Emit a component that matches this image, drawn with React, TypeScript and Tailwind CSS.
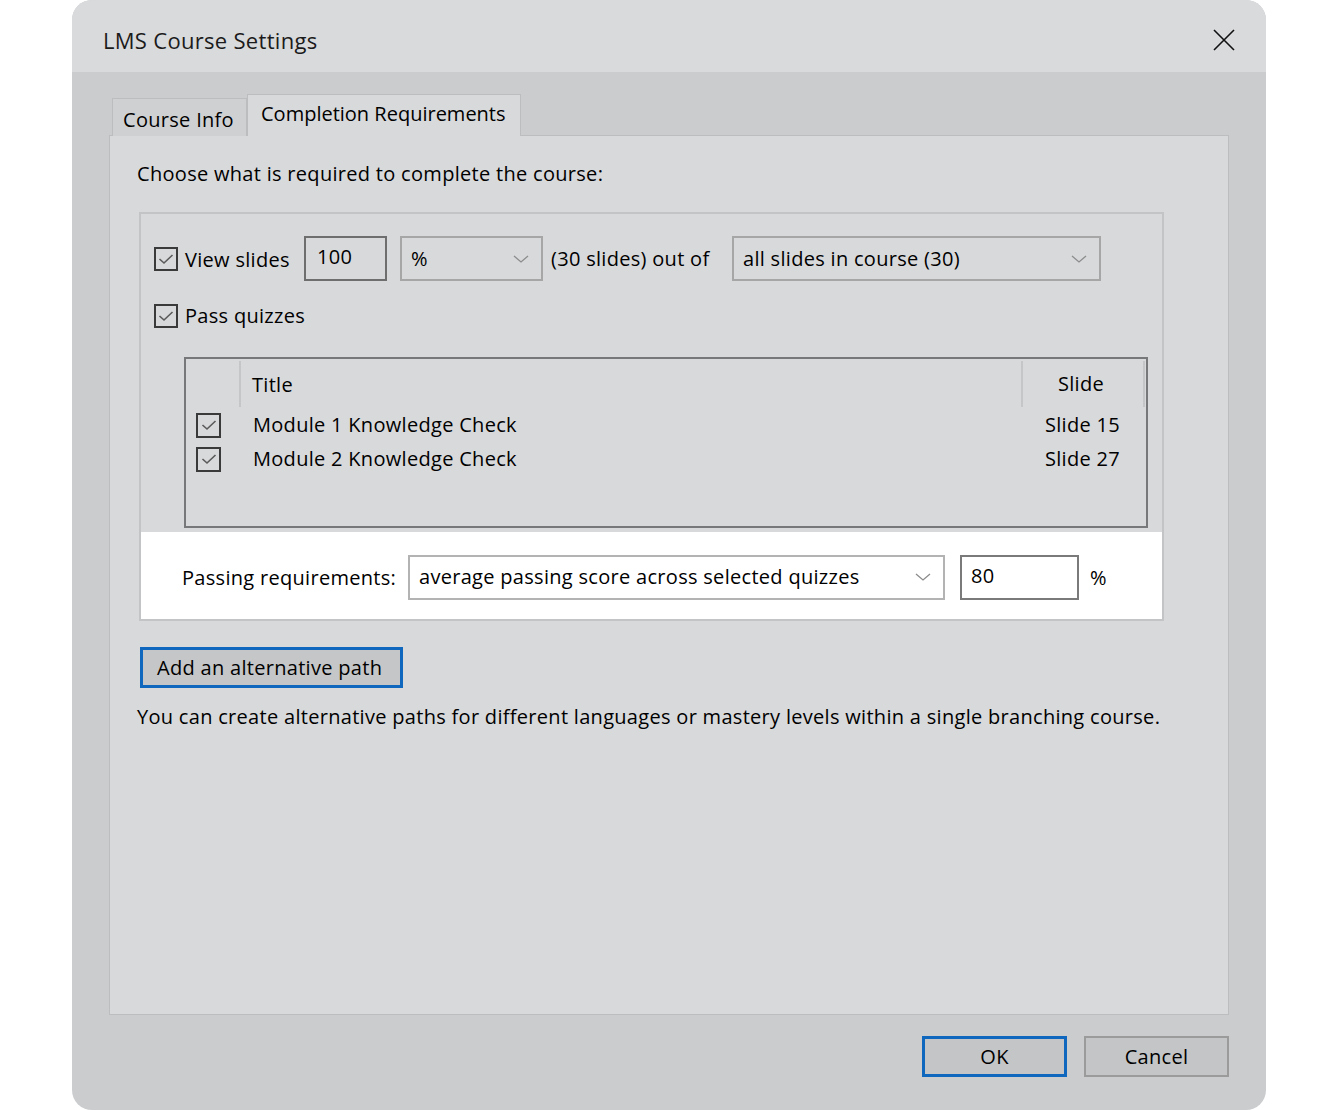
import React from 'react';

const font = { fontFamily: '"Open Sans", "Noto Sans", Arial, sans-serif' };

function Chevron() {
  return (
    <svg width="16" height="10" viewBox="0 0 16 10" className="shrink-0">
      <path d="M1 2 L8 8 L15 2" fill="none" stroke="#8c8c8c" strokeWidth="1.3" />
    </svg>
  );
}

function CheckBox({ size = 24 }: { size?: number }) {
  return (
    <div
      className="flex items-center justify-center border-2 border-[#3a3a3a] bg-transparent shrink-0"
      style={{ width: size, height: size }}
    >
      <svg width="16" height="12" viewBox="0 0 16 12">
        <path d="M1.5 6 L6 10 L14.5 2" fill="none" stroke="#5a5a5a" strokeWidth="1.6" />
      </svg>
    </div>
  );
}

function Dropdown({ value, className }: { value: string; className: string }) {
  return (
    <div className={`flex items-center justify-between border-2 pl-[9px] pr-[12px] h-[45px] ${className}`}>
      <span>{value}</span>
      <Chevron />
    </div>
  );
}

export default function App() {
  return (
    <div className="w-[1330px] h-[1110px] bg-white text-[20px] tracking-[0.3px] text-black" style={font}>
      <div className="ml-[72px] w-[1194px] h-[1110px] rounded-[20px] overflow-hidden bg-[#cbccce] flex flex-col">
        {/* Title bar */}
        <div className="h-[72px] bg-[#d9dadc] flex items-start justify-between pl-[31px] pr-[31px] shrink-0">
          <span className="text-[22px] text-[#1b1b1b] mt-[25px] leading-[30px]">LMS Course Settings</span>
          <svg width="22" height="22" viewBox="0 0 22 22" className="mt-[29px]">
            <path d="M1 1 L21 21 M21 1 L1 21" stroke="#111" strokeWidth="1.6" />
          </svg>
        </div>

        {/* Tabs */}
        <div className="pl-[37px] pr-[37px] pt-[22px] flex flex-col">
          <div className="flex items-end h-[42px] relative z-10 -mb-[1px]">
            <div className="ml-[3px] w-[135px] h-[38px] border border-b-0 border-[#bcbdbf] bg-[#cfd0d2] flex items-center pl-[10px] pt-[4px]">
              Course Info
            </div>
            <div className="w-[274px] h-[42px] border border-b-0 border-[#bcbdbf] bg-[#d8d9db] flex items-center pl-[13px] pb-[4px] tracking-[0px]">
              Completion Requirements
            </div>
          </div>

          {/* Tab panel */}
          <div className="h-[880px] border border-[#bcbdbf] bg-[#d8d9db] pl-[27px] flex flex-col">
            <div className="h-[76px] flex items-center">Choose what is required to complete the course:</div>

            {/* Group box */}
            <div className="ml-[2px] w-[1025px] border-2 border-[#c3c4c6] flex flex-col">
              <div className="flex items-center h-[45px] mt-[22px] pl-[13px]">
                <CheckBox />
                <span className="ml-[7px] mt-[3px] w-[113px]">View slides</span>
                <div className="ml-[6px] w-[83px] h-[45px] border-2 border-[#6e6e6e] pl-[11px] pt-[4px]">100</div>
                <Dropdown value="%" className="ml-[13px] w-[143px] border-[#a6a6a6]" />
                <span className="ml-[8px] w-[163px] whitespace-nowrap">(30 slides) out of</span>
                <Dropdown value="all slides in course (30)" className="ml-[18px] w-[369px] border-[#a6a6a6]" />
              </div>
              <div className="flex items-center h-[30px] mt-[20px] pl-[13px]">
                <CheckBox />
                <span className="ml-[7px]">Pass quizzes</span>
              </div>

              {/* Quiz list */}
              <div className="ml-[43px] mt-[26px] w-[964px] h-[171px] border-2 border-[#76787a] flex flex-col">
                <div className="flex h-[50px] pt-[2px]">
                  <div className="w-[55px] border-r-2 border-[#c5c6c8] h-[46px]" />
                  <div className="flex-1 flex items-center pl-[11px]">Title</div>
                  <div className="w-[122px] border-l-2 border-[#c5c6c8] h-[46px] flex items-center justify-center pr-[4px]">Slide</div>
                  <div className="w-[3px] border-l-2 border-[#c5c6c8] h-[46px]" />
                </div>
                {[
                  ['Module 1 Knowledge Check', 'Slide 15'],
                  ['Module 2 Knowledge Check', 'Slide 27'],
                ].map(([title, slide], i) => (
                  <div key={title} className={`flex items-center h-[34px] ${i === 0 ? '-mt-[1px]' : ''}`}>
                    <div className="w-[55px] pl-[10px]">
                      <CheckBox size={25} />
                    </div>
                    <div className="flex-1 pl-[12px]">{title}</div>
                    <div className="w-[125px] pl-[24px]">{slide}</div>
                  </div>
                ))}
              </div>

              {/* Passing requirements */}
              <div className="mt-[4px] h-[87px] bg-white flex items-center pl-[41px] pt-[3px]">
                <span className="mt-[2px] w-[213px] whitespace-nowrap">Passing requirements:</span>
                <Dropdown
                  value="average passing score across selected quizzes"
                  className="ml-[13px] w-[537px] border-[#b3b3b3] bg-white"
                />
                <div className="ml-[15px] w-[119px] h-[45px] border-2 border-[#7a7a7a] pl-[9px] pt-[4px]">80</div>
                <span className="ml-[11px] mt-[2px]">%</span>
              </div>
            </div>

            <div className="mt-[26px] ml-[3px] w-[263px] h-[41px] border-[3px] border-[#0f68bd] bg-[#c5c6c8] flex items-center pl-[14px]">
              Add an alternative path
            </div>
            <div className="mt-[14px]">
              You can create alternative paths for different languages or mastery levels within a single branching course.
            </div>
          </div>

          {/* Footer buttons */}
          <div className="flex justify-end gap-[17px] mt-[21px]">
            <div className="w-[145px] h-[41px] border-[3px] border-[#0f68bd] bg-[#c4c5c7] flex items-center justify-center">OK</div>
            <div className="w-[145px] h-[41px] border-2 border-[#9b9b9b] bg-[#c4c5c7] flex items-center justify-center">Cancel</div>
          </div>
        </div>
      </div>
    </div>
  );
}
